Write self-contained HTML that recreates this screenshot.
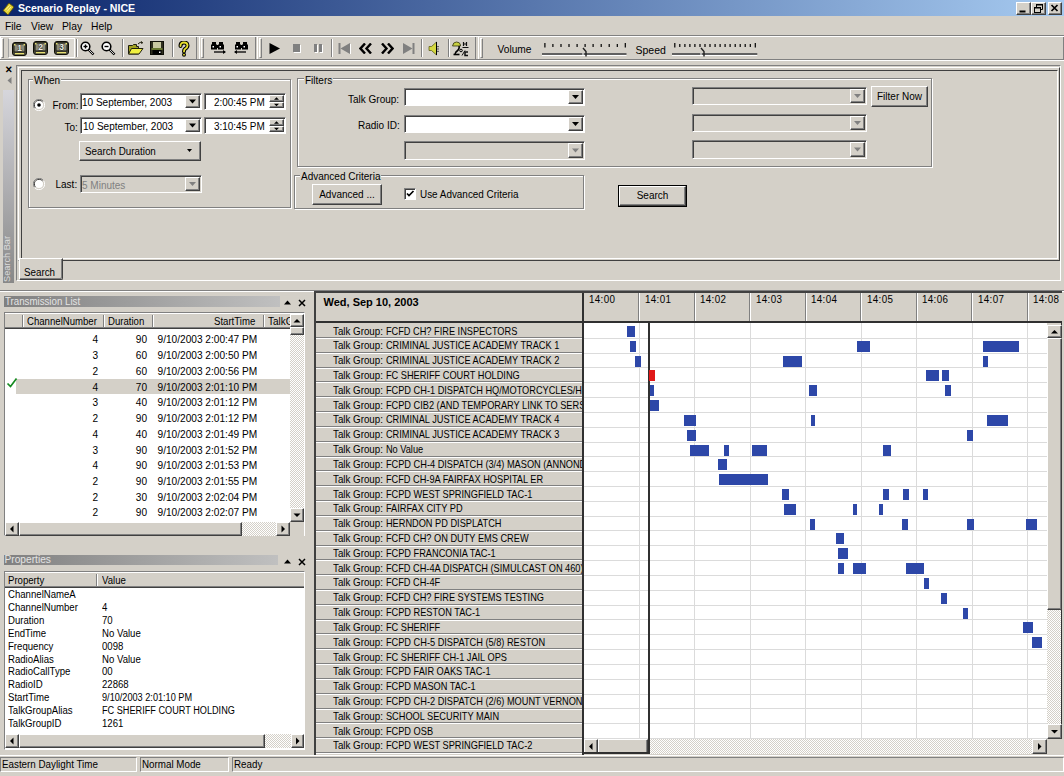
<!DOCTYPE html><html><head><meta charset="utf-8"><title>Scenario Replay - NICE</title><style>
*{margin:0;padding:0;box-sizing:border-box}
html,body{width:1064px;height:776px;overflow:hidden;background:#d4d0c8;font-family:"Liberation Sans",sans-serif;font-size:10px;color:#000}
.a{position:absolute}
.t{position:absolute;white-space:nowrap;line-height:1}
.raised{position:absolute;background:#d4d0c8;border-top:1px solid #fff;border-left:1px solid #fff;border-right:1px solid #404040;border-bottom:1px solid #404040;box-shadow:inset -1px -1px 0 #808080}
.sunken{position:absolute;background:#fff;border-top:1px solid #808080;border-left:1px solid #808080;border-right:1px solid #fff;border-bottom:1px solid #fff;box-shadow:inset 1px 1px 0 #404040}
.grp{position:absolute;border:1px solid #808080;box-shadow:1px 1px 0 #fff, inset 1px 1px 0 #fff}
.grpl{position:absolute;background:#d4d0c8;padding:0 1px;white-space:nowrap;line-height:1}
.chk{background-image:repeating-conic-gradient(#d4d0c8 0 25%, #fff 0 50%);background-size:2px 2px}
</style></head><body>
<div class="a" style="left:0px;top:0px;width:1064px;height:16px;background:linear-gradient(90deg,#0a246a,#a6caf0)"></div>
<svg class="a" style="left:2px;top:2px" width="13" height="14" viewBox="0 0 13 14"><path d="M1 8.5 L7 1 L12 5 L6 13 Z" fill="#e0d030" stroke="#504a10" stroke-width="0.9" stroke-linejoin="round"/><path d="M3.5 8 L7.5 3.5 M5 9.5 L9 5" stroke="#f8f0a0" stroke-width="1"/></svg>
<div class="t" style="left:18px;top:3px;color:#fff;font-weight:bold;font-size:10.6px">Scenario Replay - NICE</div>
<div class="raised" style="left:1016px;top:2px;width:15px;height:13px;"></div>
<div class="raised" style="left:1031px;top:2px;width:15px;height:13px;"></div>
<div class="raised" style="left:1048px;top:2px;width:14px;height:13px;"></div>
<svg class="a" style="left:1016px;top:2px" width="48" height="13" viewBox="0 0 48 13"><rect x="3.5" y="8.5" width="6" height="2" fill="#000"/><rect x="18.5" y="5.5" width="6" height="5" fill="none" stroke="#000"/><rect x="18" y="5" width="7" height="1.5" fill="#000"/><path d="M20.5 5 V2.5 H26.5 V7.5 H25" fill="none" stroke="#000"/><rect x="20" y="2" width="7" height="1.5" fill="#000"/><path d="M35.5 3 L41.5 9 M41.5 3 L35.5 9" stroke="#000" stroke-width="1.7"/></svg>
<div class="t" style="left:5px;top:22.2px;font-size:10.3px">File</div>
<div class="t" style="left:31px;top:22.2px;font-size:10.3px">View</div>
<div class="t" style="left:62px;top:22.2px;font-size:10.3px">Play</div>
<div class="t" style="left:91px;top:22.2px;font-size:10.3px">Help</div>
<div class="a" style="left:0px;top:35px;width:1064px;height:1px;background:#808080"></div>
<div class="a" style="left:0px;top:36px;width:1064px;height:1px;background:#fff"></div>
<div class="a" style="left:0px;top:59px;width:1064px;height:1px;background:#808080"></div>
<div class="a" style="left:0px;top:60px;width:1064px;height:1px;background:#fff"></div>
<div class="a" style="left:0px;top:37px;width:197px;height:22px;border-left:1px solid #fff;border-right:1px solid #808080"></div>
<div class="a" style="left:199px;top:37px;width:57px;height:22px;border-left:1px solid #fff;border-right:1px solid #808080"></div>
<div class="a" style="left:257px;top:37px;width:219px;height:22px;border-left:1px solid #fff;border-right:1px solid #808080"></div>
<div class="a" style="left:478px;top:37px;width:586px;height:22px;border-left:1px solid #fff;border-right:1px solid #808080"></div>
<div class="a" style="left:1px;top:38px;width:3px;height:20px;border-left:1px solid #fff;border-top:1px solid #fff;border-right:1px solid #808080;border-bottom:1px solid #808080"></div>
<div class="a" style="left:201px;top:38px;width:3px;height:20px;border-left:1px solid #fff;border-top:1px solid #fff;border-right:1px solid #808080;border-bottom:1px solid #808080"></div>
<div class="a" style="left:259px;top:38px;width:3px;height:20px;border-left:1px solid #fff;border-top:1px solid #fff;border-right:1px solid #808080;border-bottom:1px solid #808080"></div>
<div class="a" style="left:480px;top:38px;width:3px;height:20px;border-left:1px solid #fff;border-top:1px solid #fff;border-right:1px solid #808080;border-bottom:1px solid #808080"></div>
<div class="a" style="left:8px;top:38px;width:67px;height:20px;border-left:1px solid #a0a0a0;border-top:1px solid #fff;border-right:1px solid #fff;border-bottom:1px solid #fff;background:#dcd9d2"></div>
<svg class="a" style="left:12px;top:42px" width="15" height="14" viewBox="0 0 15 14"><rect x="0.5" y="0.5" width="14" height="13" rx="2.5" fill="#505040" stroke="#101008"/><rect x="2" y="2" width="11" height="8" fill="#8a8a78" stroke="#181810" stroke-width="1"/><rect x="2" y="2" width="1.5" height="1.5" fill="#e8e070"/><rect x="11.5" y="2" width="1.5" height="1.5" fill="#e8e070"/><rect x="3" y="11" width="9" height="1.3" fill="#e8e070"/><text x="7.5" y="9" font-family="Liberation Sans" font-weight="bold" font-size="8.5" fill="#f0f0e8" stroke="#000" stroke-width="0.6" paint-order="stroke" text-anchor="middle">1</text></svg>
<svg class="a" style="left:33px;top:41px" width="15" height="14" viewBox="0 0 15 14"><rect x="0.5" y="0.5" width="14" height="13" rx="2.5" fill="#505040" stroke="#101008"/><rect x="2" y="2" width="11" height="8" fill="#8a8a78" stroke="#181810" stroke-width="1"/><rect x="2" y="2" width="1.5" height="1.5" fill="#e8e070"/><rect x="11.5" y="2" width="1.5" height="1.5" fill="#e8e070"/><rect x="3" y="11" width="9" height="1.3" fill="#e8e070"/><text x="7.5" y="9" font-family="Liberation Sans" font-weight="bold" font-size="8.5" fill="#f0f0e8" stroke="#000" stroke-width="0.6" paint-order="stroke" text-anchor="middle">2</text></svg>
<svg class="a" style="left:54px;top:41px" width="15" height="14" viewBox="0 0 15 14"><rect x="0.5" y="0.5" width="14" height="13" rx="2.5" fill="#505040" stroke="#101008"/><rect x="2" y="2" width="11" height="8" fill="#8a8a78" stroke="#181810" stroke-width="1"/><rect x="2" y="2" width="1.5" height="1.5" fill="#e8e070"/><rect x="11.5" y="2" width="1.5" height="1.5" fill="#e8e070"/><rect x="3" y="11" width="9" height="1.3" fill="#e8e070"/><text x="7.5" y="9" font-family="Liberation Sans" font-weight="bold" font-size="8.5" fill="#f0f0e8" stroke="#000" stroke-width="0.6" paint-order="stroke" text-anchor="middle">3</text></svg>
<div class="a" style="left:76px;top:39px;width:1px;height:18px;background:#808080"></div>
<div class="a" style="left:77px;top:39px;width:1px;height:18px;background:#fff"></div>
<svg class="a" style="left:80px;top:41px" width="15" height="15" viewBox="0 0 15 15"><circle cx="5.5" cy="5.5" r="4.3" fill="#fff" stroke="#000" stroke-width="1.6"/><path d="M8.5 8.5 L13.5 13.5" stroke="#000" stroke-width="2.4"/><path d="M9 9 L13 13" stroke="#fff" stroke-width="0.8"/><path d="M3.5 5.5 h4" stroke="#000" stroke-width="1.4"/><path d="M5.5 3.5 v4" stroke="#000" stroke-width="1.4"/></svg>
<svg class="a" style="left:101px;top:41px" width="15" height="15" viewBox="0 0 15 15"><circle cx="5.5" cy="5.5" r="4.3" fill="#fff" stroke="#000" stroke-width="1.6"/><path d="M8.5 8.5 L13.5 13.5" stroke="#000" stroke-width="2.4"/><path d="M9 9 L13 13" stroke="#fff" stroke-width="0.8"/><path d="M3.5 5.5 h4" stroke="#000" stroke-width="1.4"/></svg>
<div class="a" style="left:122px;top:39px;width:1px;height:18px;background:#808080"></div>
<div class="a" style="left:123px;top:39px;width:1px;height:18px;background:#fff"></div>
<svg class="a" style="left:128px;top:41px" width="16" height="15" viewBox="0 0 16 15"><path d="M0.5 4.5 h4 l1 -1 h3 v2 h2 v7.5 h-10 z" fill="#a0a020" stroke="#202010"/><path d="M0.5 13 L3.5 7.5 h11.5 L11 13 z" fill="#f0f040" stroke="#202010"/><path d="M10 3 Q12 0.5 14.5 1.5 M13 0.5 L14.5 1.5 L13.5 3" stroke="#202010" fill="none"/></svg>
<svg class="a" style="left:150px;top:41px" width="14" height="14" viewBox="0 0 14 14"><rect x="0.5" y="0.5" width="13" height="13" fill="#303020" stroke="#101008"/><rect x="3" y="1" width="8" height="6" fill="#c8c8a0"/><rect x="2.5" y="9" width="9" height="4.5" fill="#000"/><rect x="9" y="10.5" width="1.5" height="1.5" fill="#fff"/><rect x="1.5" y="7.5" width="11" height="1" fill="#a0c040"/></svg>
<div class="a" style="left:172px;top:39px;width:1px;height:18px;background:#808080"></div>
<div class="a" style="left:173px;top:39px;width:1px;height:18px;background:#fff"></div>
<svg class="a" style="left:178px;top:41px" width="12" height="16" viewBox="0 0 12 16"><path d="M2.5 5 Q2.5 1.5 6 1.5 Q9.5 1.5 9.5 4.5 Q9.5 6.5 7 8 Q6 8.7 6 10.5" fill="none" stroke="#000" stroke-width="4" stroke-linecap="round"/><path d="M2.5 5 Q2.5 1.5 6 1.5 Q9.5 1.5 9.5 4.5 Q9.5 6.5 7 8 Q6 8.7 6 10.5" fill="none" stroke="#e8e030" stroke-width="1.8" stroke-linecap="round"/><circle cx="6" cy="13.7" r="2" fill="#000"/><circle cx="6" cy="13.7" r="0.9" fill="#e8e030"/></svg>
<svg class="a" style="left:211px;top:41px" width="16" height="13" viewBox="0 0 16 13"><g transform="translate(0,0)"><rect x="1" y="1" width="4" height="3" fill="#000"/><rect x="8" y="1" width="4" height="3" fill="#000"/><rect x="0" y="3.5" width="6" height="5" fill="#000"/><rect x="7" y="3.5" width="6" height="5" fill="#000"/><rect x="5" y="4" width="3" height="3" fill="#000"/><rect x="1.5" y="5" width="1.5" height="1.5" fill="#fff"/><rect x="8.5" y="5" width="1.5" height="1.5" fill="#fff"/></g><path d="M3 11 h11" stroke="#000" stroke-width="1.3"/><path d="M12 9 l3 2 l-3 2 z" fill="#000"/></svg>
<svg class="a" style="left:233px;top:41px" width="16" height="13" viewBox="0 0 16 13"><g transform="translate(2,0)"><rect x="1" y="1" width="4" height="3" fill="#000"/><rect x="8" y="1" width="4" height="3" fill="#000"/><rect x="0" y="3.5" width="6" height="5" fill="#000"/><rect x="7" y="3.5" width="6" height="5" fill="#000"/><rect x="5" y="4" width="3" height="3" fill="#000"/><rect x="1.5" y="5" width="1.5" height="1.5" fill="#fff"/><rect x="8.5" y="5" width="1.5" height="1.5" fill="#fff"/></g><path d="M2 11 h11" stroke="#000" stroke-width="1.3"/><path d="M4 9 l-3 2 l3 2 z" fill="#000"/></svg>
<svg class="a" style="left:269px;top:43px" width="12" height="11"><path d="M0.5 0 L11 5.5 L0.5 11 Z" fill="#000"/></svg>
<div class="a" style="left:293px;top:44px;width:7px;height:8px;background:#808080;box-shadow:1px 1px 0 #fff"></div>
<div class="a" style="left:314px;top:44px;width:3px;height:8px;background:#808080;box-shadow:1px 1px 0 #fff"></div>
<div class="a" style="left:319px;top:44px;width:3px;height:8px;background:#808080;box-shadow:1px 1px 0 #fff"></div>
<div class="a" style="left:331px;top:39px;width:1px;height:18px;background:#808080"></div>
<div class="a" style="left:332px;top:39px;width:1px;height:18px;background:#fff"></div>
<svg class="a" style="left:338px;top:43px" width="13" height="11"><rect x="0.5" y="0" width="2" height="11" fill="#808080"/><path d="M12 0 L2.5 5.5 L12 11 Z" fill="#808080"/><path d="M12.5 1 v10.5 h-10" stroke="#fff" fill="none"/></svg>
<svg class="a" style="left:359px;top:43px" width="14" height="11"><path d="M6 0.5 L1.5 5.5 L6 10.5 M12 0.5 L7.5 5.5 L12 10.5" stroke="#000" stroke-width="2.4" fill="none"/></svg>
<svg class="a" style="left:380px;top:43px" width="14" height="11"><path d="M2 0.5 L6.5 5.5 L2 10.5 M8 0.5 L12.5 5.5 L8 10.5" stroke="#000" stroke-width="2.4" fill="none"/></svg>
<svg class="a" style="left:402px;top:43px" width="13" height="11"><path d="M1 0 L10.5 5.5 L1 11 Z" fill="#808080"/><rect x="10.5" y="0" width="2" height="11" fill="#808080"/></svg>
<div class="a" style="left:421px;top:39px;width:1px;height:18px;background:#808080"></div>
<div class="a" style="left:422px;top:39px;width:1px;height:18px;background:#fff"></div>
<svg class="a" style="left:428px;top:41px" width="12" height="15" viewBox="0 0 12 15"><path d="M1 5.5 h2.5 l5 -4.5 v13 l-5 -4.5 h-2.5 z" fill="#d4d840" stroke="#505010" stroke-width="0.7"/><path d="M8.5 1 v13" stroke="#000" stroke-width="1"/><path d="M10 5 v1.2 M10 7.4 v1.2 M10 9.8 v1.2" stroke="#000" stroke-width="1"/></svg>
<div class="a" style="left:448px;top:39px;width:1px;height:18px;background:#808080"></div>
<div class="a" style="left:449px;top:39px;width:1px;height:18px;background:#fff"></div>
<svg class="a" style="left:452px;top:41px" width="18" height="16" viewBox="0 0 18 16"><path d="M0.5 5 Q1 1 4.5 1 Q8 1 8.5 4 L8.5 5 Z" fill="#c8d040" stroke="#303010" stroke-width="0.8"/><path d="M7 5 Q8 8 4 11 L3 13" fill="none" stroke="#000" stroke-width="1.6"/><path d="M1.5 13.5 h6" stroke="#000" stroke-width="1.6"/><circle cx="9" cy="9.5" r="1.3" fill="none" stroke="#000" stroke-width="1"/><path d="M11.5 1 v4 M14.5 1 v4 M11.5 3 h3 M10.5 6.5 h6" stroke="#101010" stroke-width="1.2"/><path d="M16 11 h-3 v3.5 h3" fill="none" stroke="#101010" stroke-width="1.5"/><path d="M10 14.5 l3 -5" stroke="#101010" stroke-width="1"/></svg>
<div class="t" style="left:497.5px;top:45px;font-size:10.2px">Volume</div>
<div class="t" style="left:635.5px;top:45px;font-size:10.5px">Speed</div>
<svg class="a" style="left:541.5px;top:41px" width="86.5" height="17"><rect x="2.3" y="2" width="1.2" height="4.5" fill="#000"/><rect x="10.3" y="3" width="1.2" height="3" fill="#000"/><rect x="18.4" y="3" width="1.2" height="3" fill="#000"/><rect x="26.4" y="3" width="1.2" height="3" fill="#000"/><rect x="34.5" y="3" width="1.2" height="3" fill="#000"/><rect x="42.5" y="3" width="1.2" height="3" fill="#000"/><rect x="50.5" y="3" width="1.2" height="3" fill="#000"/><rect x="58.6" y="3" width="1.2" height="3" fill="#000"/><rect x="66.6" y="3" width="1.2" height="3" fill="#000"/><rect x="74.7" y="3" width="1.2" height="3" fill="#000"/><rect x="82.7" y="2" width="1.2" height="4.5" fill="#000"/><rect x="0" y="12" width="84.5" height="2" fill="#606060"/><rect x="0" y="14" width="84.5" height="1" fill="#fff"/><path d="M41.0 7 L44.0 10.5 V15.5" fill="none" stroke="#202020" stroke-width="1.4"/><path d="M41.0 12 V14.5" stroke="#fff" stroke-width="1"/></svg>
<svg class="a" style="left:672.3px;top:41px" width="87.30000000000007" height="17"><rect x="2.2" y="2" width="1.2" height="4.5" fill="#000"/><rect x="7.2" y="3" width="1.2" height="3" fill="#000"/><rect x="12.3" y="3" width="1.2" height="3" fill="#000"/><rect x="17.3" y="3" width="1.2" height="3" fill="#000"/><rect x="22.3" y="3" width="1.2" height="3" fill="#000"/><rect x="27.4" y="3" width="1.2" height="3" fill="#000"/><rect x="32.4" y="3" width="1.2" height="3" fill="#000"/><rect x="37.4" y="3" width="1.2" height="3" fill="#000"/><rect x="42.5" y="3" width="1.2" height="3" fill="#000"/><rect x="47.5" y="3" width="1.2" height="3" fill="#000"/><rect x="52.5" y="3" width="1.2" height="3" fill="#000"/><rect x="57.5" y="3" width="1.2" height="3" fill="#000"/><rect x="62.6" y="3" width="1.2" height="3" fill="#000"/><rect x="67.6" y="3" width="1.2" height="3" fill="#000"/><rect x="72.6" y="3" width="1.2" height="3" fill="#000"/><rect x="77.7" y="3" width="1.2" height="3" fill="#000"/><rect x="82.7" y="2" width="1.2" height="4.5" fill="#000"/><rect x="0" y="12" width="85.30000000000007" height="2" fill="#606060"/><rect x="0" y="14" width="85.30000000000007" height="1" fill="#fff"/><path d="M29.0 7 L32.0 10.5 V15.5" fill="none" stroke="#202020" stroke-width="1.4"/><path d="M29.0 12 V14.5" stroke="#fff" stroke-width="1"/></svg>
<div class="t" style="left:5px;top:65px;font-size:10px;font-weight:bold;transform-origin:0 0;transform:scaleX(0.9000)">&#x2715;</div>
<svg class="a" style="left:7px;top:77px" width="5" height="8"><path d="M4.5 0 L0.5 3.5 L4.5 7 Z" fill="#808080"/></svg>
<div class="a" style="left:3px;top:90px;width:11px;height:193px;background:linear-gradient(0deg,#888888,#d6d6dc)"></div>
<div class="t" style="left:3.2px;top:282px;color:#dcdcdc;font-size:9.2px;transform-origin:0 0;transform:rotate(-90deg)">Search Bar</div>
<div class="a" style="left:16px;top:65px;width:1045px;height:216px;border-top:1px solid #808080;border-left:1px solid #808080;border-right:1px solid #fff;border-bottom:1px solid #fff"></div>
<div class="a" style="left:18px;top:67px;width:1042px;height:194px;border-top:1px solid #fff;border-left:1px solid #fff;border-right:1px solid #404040;border-bottom:1px solid #404040"></div>
<div class="a" style="left:21px;top:70px;width:1037px;height:189px;border-top:1px solid #404040;border-left:1px solid #404040;border-right:1px solid #fff;border-bottom:1px solid #fff"></div>
<div class="a" style="left:19px;top:258px;width:44px;height:22px;background:#d4d0c8;border-top:1px solid #fff;border-left:1px solid #fff;border-right:1px solid #404040;border-bottom:1px solid #404040;border-bottom-right-radius:2px;box-shadow:inset -1px -1px 0 #808080"></div>
<div class="t" style="left:24.3px;top:267.5px;font-size:10px;transform-origin:0 0;transform:scaleX(0.9800)">Search</div>
<div class="grp" style="left:28px;top:79px;width:263px;height:129px"></div>
<div class="grpl" style="left:33px;top:76px;font-size:10px">When</div>
<svg class="a" style="left:33px;top:99px" width="12" height="12" viewBox="0 0 12 12"><path d="M10.5 2.5 A5.5 5.5 0 0 0 1.5 9.5" stroke="#808080" fill="none"/><path d="M9.5 3 A4.5 4.5 0 0 0 2.5 9" stroke="#404040" fill="none"/><path d="M1.5 9.5 A5.5 5.5 0 0 0 10.5 2.5" stroke="#fff" fill="none"/><circle cx="6" cy="6" r="4" fill="#fff"/><circle cx="6" cy="6" r="1.8" fill="#000"/></svg>
<div class="t" style="left:52.5px;top:100.8px;font-size:10px">From:</div>
<div class="sunken" style="left:80px;top:93px;width:122px;height:17px;background:#fff"></div>
<div class="raised" style="left:185px;top:95px;width:15px;height:13px;"></div>
<svg class="a" style="left:185px;top:95px" width="15" height="13"><path d="M4.0 4.5 h7 l-3.5 4 z" fill="#000"/><path d="M4.0 5.0 h7 l-3.5 3.5 z" fill="#fff" transform="translate(1,1)" opacity="0"/></svg>
<div class="t" style="left:82px;top:98.0px;color:#000;font-size:10px">10 September, 2003</div>
<div class="sunken" style="left:204px;top:93px;width:82px;height:17px"></div>
<div class="raised" style="left:269px;top:95px;width:15px;height:6.5px;"></div>
<div class="raised" style="left:269px;top:101.5px;width:15px;height:6.5px;"></div>
<svg class="a" style="left:269px;top:95px" width="15" height="13"><path d="M5.0 4.75 h5 l-2.5 -2.5 z" fill="#000"/><path d="M5.0 8.75 h5 l-2.5 2.5 z" fill="#000"/></svg>
<div class="t" style="left:213.5px;top:98.0px;font-size:10px;transform-origin:0 0;transform:scaleX(0.9900)">2:00:45 PM</div>
<div class="t" style="left:64.5px;top:122.5px;font-size:10px">To:</div>
<div class="sunken" style="left:80px;top:117px;width:122px;height:17px;background:#fff"></div>
<div class="raised" style="left:185px;top:119px;width:15px;height:13px;"></div>
<svg class="a" style="left:185px;top:119px" width="15" height="13"><path d="M4.0 4.5 h7 l-3.5 4 z" fill="#000"/><path d="M4.0 5.0 h7 l-3.5 3.5 z" fill="#fff" transform="translate(1,1)" opacity="0"/></svg>
<div class="t" style="left:83px;top:122.0px;color:#000;font-size:10px">10 September, 2003</div>
<div class="sunken" style="left:204px;top:117px;width:82px;height:17px"></div>
<div class="raised" style="left:269px;top:119px;width:15px;height:6.5px;"></div>
<div class="raised" style="left:269px;top:125.5px;width:15px;height:6.5px;"></div>
<svg class="a" style="left:269px;top:119px" width="15" height="13"><path d="M5.0 4.75 h5 l-2.5 -2.5 z" fill="#000"/><path d="M5.0 8.75 h5 l-2.5 2.5 z" fill="#000"/></svg>
<div class="t" style="left:213.5px;top:122.0px;font-size:10px;transform-origin:0 0;transform:scaleX(0.9900)">3:10:45 PM</div>
<div class="raised" style="left:79px;top:141px;width:122px;height:20px;"></div>
<div class="t" style="left:85px;top:146.8px;font-size:10px;transform-origin:0 0;transform:scaleX(0.9800)">Search Duration</div>
<svg class="a" style="left:187px;top:149px" width="7" height="4"><path d="M0 0 h5 l-2.5 3 z" fill="#000"/></svg>
<svg class="a" style="left:33px;top:178px" width="12" height="12" viewBox="0 0 12 12"><path d="M10.5 2.5 A5.5 5.5 0 0 0 1.5 9.5" stroke="#808080" fill="none"/><path d="M9.5 3 A4.5 4.5 0 0 0 2.5 9" stroke="#404040" fill="none"/><path d="M1.5 9.5 A5.5 5.5 0 0 0 10.5 2.5" stroke="#fff" fill="none"/><circle cx="6" cy="6" r="4" fill="#fff"/></svg>
<div class="t" style="left:55.5px;top:180px;font-size:10px">Last:</div>
<div class="sunken" style="left:80px;top:175px;width:122px;height:18px;background:#d4d0c8"></div>
<div class="raised" style="left:185px;top:177px;width:15px;height:14px;"></div>
<svg class="a" style="left:185px;top:177px" width="15" height="14"><path d="M4.0 5.0 h7 l-3.5 4 z" fill="#808080"/><path d="M4.0 5.5 h7 l-3.5 3.5 z" fill="#fff" transform="translate(1,1)" opacity="0"/></svg>
<div class="t" style="left:82px;top:180.5px;color:#808080;font-size:10px">5 Minutes</div>
<div class="grp" style="left:297px;top:78px;width:635px;height:89px"></div>
<div class="grpl" style="left:304px;top:76px;font-size:10px">Filters</div>
<div class="t" style="left:348px;top:94.5px;font-size:10px">Talk Group:</div>
<div class="sunken" style="left:404px;top:88px;width:181px;height:18px;background:#fff"></div>
<div class="raised" style="left:568px;top:90px;width:15px;height:14px;"></div>
<svg class="a" style="left:568px;top:90px" width="15" height="14"><path d="M4.0 5.0 h7 l-3.5 4 z" fill="#000"/><path d="M4.0 5.5 h7 l-3.5 3.5 z" fill="#fff" transform="translate(1,1)" opacity="0"/></svg>
<div class="t" style="left:358px;top:121px;font-size:10px">Radio ID:</div>
<div class="sunken" style="left:404px;top:115px;width:181px;height:18px;background:#fff"></div>
<div class="raised" style="left:568px;top:117px;width:15px;height:14px;"></div>
<svg class="a" style="left:568px;top:117px" width="15" height="14"><path d="M4.0 5.0 h7 l-3.5 4 z" fill="#000"/><path d="M4.0 5.5 h7 l-3.5 3.5 z" fill="#fff" transform="translate(1,1)" opacity="0"/></svg>
<div class="sunken" style="left:404px;top:141px;width:181px;height:19px;background:#d4d0c8"></div>
<div class="raised" style="left:568px;top:143px;width:15px;height:15px;"></div>
<svg class="a" style="left:568px;top:143px" width="15" height="15"><path d="M4.0 5.5 h7 l-3.5 4 z" fill="#808080"/><path d="M4.0 6.0 h7 l-3.5 3.5 z" fill="#fff" transform="translate(1,1)" opacity="0"/></svg>
<div class="sunken" style="left:692px;top:87px;width:175px;height:18px;background:#d4d0c8"></div>
<div class="raised" style="left:850px;top:89px;width:15px;height:14px;"></div>
<svg class="a" style="left:850px;top:89px" width="15" height="14"><path d="M4.0 5.0 h7 l-3.5 4 z" fill="#808080"/><path d="M4.0 5.5 h7 l-3.5 3.5 z" fill="#fff" transform="translate(1,1)" opacity="0"/></svg>
<div class="sunken" style="left:692px;top:114px;width:175px;height:18px;background:#d4d0c8"></div>
<div class="raised" style="left:850px;top:116px;width:15px;height:14px;"></div>
<svg class="a" style="left:850px;top:116px" width="15" height="14"><path d="M4.0 5.0 h7 l-3.5 4 z" fill="#808080"/><path d="M4.0 5.5 h7 l-3.5 3.5 z" fill="#fff" transform="translate(1,1)" opacity="0"/></svg>
<div class="sunken" style="left:692px;top:140px;width:175px;height:19px;background:#d4d0c8"></div>
<div class="raised" style="left:850px;top:142px;width:15px;height:15px;"></div>
<svg class="a" style="left:850px;top:142px" width="15" height="15"><path d="M4.0 5.5 h7 l-3.5 4 z" fill="#808080"/><path d="M4.0 6.0 h7 l-3.5 3.5 z" fill="#fff" transform="translate(1,1)" opacity="0"/></svg>
<div class="raised" style="left:871px;top:86px;width:57px;height:21px;"></div>
<div class="t" style="left:871px;top:91.5px;width:57px;text-align:center;font-size:10px">Filter Now</div>
<div class="grp" style="left:294px;top:175px;width:290px;height:34px"></div>
<div class="grpl" style="left:300px;top:171.5px;font-size:10px">Advanced Criteria</div>
<div class="raised" style="left:312px;top:184px;width:70px;height:21px;"></div>
<div class="t" style="left:312px;top:189.5px;width:70px;text-align:center;font-size:10px">Advanced ...</div>
<div class="sunken" style="left:404px;top:188px;width:12px;height:12px"></div>
<svg class="a" style="left:404px;top:188px" width="12" height="12"><path d="M3 5.5 L5 7.5 L9.5 3" stroke="#000" stroke-width="1.7" fill="none"/></svg>
<div class="t" style="left:420px;top:189.7px;font-size:10px;transform-origin:0 0;transform:scaleX(0.9900)">Use Advanced Criteria</div>
<div class="a" style="left:618px;top:185px;width:69px;height:22px;border:1px solid #000"></div>
<div class="raised" style="left:619px;top:186px;width:67px;height:20px;"></div>
<div class="t" style="left:618px;top:191.0px;width:69px;text-align:center;font-size:10px">Search</div>
<div class="a" style="left:0px;top:290px;width:1064px;height:1px;background:#808080"></div>
<div class="a" style="left:0px;top:291px;width:1064px;height:1px;background:#fff"></div>
<div class="a" style="left:4px;top:296px;width:276px;height:11px;background:linear-gradient(90deg,#808080,#c0c0c0)"></div>
<div class="t" style="left:4.5px;top:297.2px;color:#e4e4e4;font-size:10px;transform-origin:0 0;transform:scaleX(0.9700)">Transmission List</div>
<svg class="a" style="left:284px;top:300px" width="8" height="5"><path d="M0 4.5 h7 l-3.5 -4 z" fill="#000"/></svg>
<svg class="a" style="left:298px;top:299px" width="8" height="8"><path d="M1 1 L7 7 M7 1 L1 7" stroke="#000" stroke-width="1.5"/></svg>
<div class="a" style="left:4px;top:312px;width:301px;height:224px;background:#fff;border:1px solid #808080;border-right-color:#fff;border-bottom-color:#fff"></div>
<div class="a" style="left:5px;top:313px;width:286px;height:16px;background:#d4d0c8;border-top:1px solid #fff;border-bottom:1px solid #404040;box-shadow:inset 0 -1px 0 #808080"></div>
<div class="a" style="left:22px;top:315px;width:1px;height:12px;background:#808080"></div>
<div class="a" style="left:23px;top:315px;width:1px;height:12px;background:#fff"></div>
<div class="a" style="left:103px;top:315px;width:1px;height:12px;background:#808080"></div>
<div class="a" style="left:104px;top:315px;width:1px;height:12px;background:#fff"></div>
<div class="a" style="left:152px;top:315px;width:1px;height:12px;background:#808080"></div>
<div class="a" style="left:153px;top:315px;width:1px;height:12px;background:#fff"></div>
<div class="a" style="left:263px;top:315px;width:1px;height:12px;background:#808080"></div>
<div class="a" style="left:264px;top:315px;width:1px;height:12px;background:#fff"></div>
<div class="t" style="left:27px;top:317px;font-size:10px;transform-origin:0 0;transform:scaleX(0.9600)">ChannelNumber</div>
<div class="t" style="left:108px;top:317px;font-size:10px;transform-origin:0 0;transform:scaleX(0.9600)">Duration</div>
<div class="t" style="left:214px;top:317px;font-size:10px;transform-origin:0 0;transform:scaleX(0.9600)">StartTime</div>
<div class="t" style="left:268px;top:317px;width:22px;overflow:hidden;font-size:10px">TalkGroup</div>
<div class="t" style="left:60px;top:335.4px;width:38px;text-align:right;font-size:10.1px">4</div>
<div class="t" style="left:110px;top:335.4px;width:37px;text-align:right;font-size:10.1px">90</div>
<div class="t" style="left:157.5px;top:335.4px;font-size:10.15px">9/10/2003 2:00:47 PM</div>
<div class="t" style="left:60px;top:351.13px;width:38px;text-align:right;font-size:10.1px">3</div>
<div class="t" style="left:110px;top:351.13px;width:37px;text-align:right;font-size:10.1px">60</div>
<div class="t" style="left:157.5px;top:351.13px;font-size:10.15px">9/10/2003 2:00:50 PM</div>
<div class="t" style="left:60px;top:366.85999999999996px;width:38px;text-align:right;font-size:10.1px">2</div>
<div class="t" style="left:110px;top:366.85999999999996px;width:37px;text-align:right;font-size:10.1px">60</div>
<div class="t" style="left:157.5px;top:366.85999999999996px;font-size:10.15px">9/10/2003 2:00:56 PM</div>
<div class="a" style="left:16px;top:378.59px;width:274px;height:15px;background:#d4d0c8"></div>
<svg class="a" style="left:6px;top:377.09px" width="12" height="12"><path d="M1.5 6.5 L4.5 9.5 L10.5 1.5" stroke="#148a20" stroke-width="1.7" fill="none"/></svg>
<div class="t" style="left:60px;top:382.59px;width:38px;text-align:right;font-size:10.1px">4</div>
<div class="t" style="left:110px;top:382.59px;width:37px;text-align:right;font-size:10.1px">70</div>
<div class="t" style="left:157.5px;top:382.59px;font-size:10.15px">9/10/2003 2:01:10 PM</div>
<div class="t" style="left:60px;top:398.32px;width:38px;text-align:right;font-size:10.1px">3</div>
<div class="t" style="left:110px;top:398.32px;width:37px;text-align:right;font-size:10.1px">40</div>
<div class="t" style="left:157.5px;top:398.32px;font-size:10.15px">9/10/2003 2:01:12 PM</div>
<div class="t" style="left:60px;top:414.04999999999995px;width:38px;text-align:right;font-size:10.1px">2</div>
<div class="t" style="left:110px;top:414.04999999999995px;width:37px;text-align:right;font-size:10.1px">90</div>
<div class="t" style="left:157.5px;top:414.04999999999995px;font-size:10.15px">9/10/2003 2:01:12 PM</div>
<div class="t" style="left:60px;top:429.78px;width:38px;text-align:right;font-size:10.1px">4</div>
<div class="t" style="left:110px;top:429.78px;width:37px;text-align:right;font-size:10.1px">40</div>
<div class="t" style="left:157.5px;top:429.78px;font-size:10.15px">9/10/2003 2:01:49 PM</div>
<div class="t" style="left:60px;top:445.51px;width:38px;text-align:right;font-size:10.1px">3</div>
<div class="t" style="left:110px;top:445.51px;width:37px;text-align:right;font-size:10.1px">90</div>
<div class="t" style="left:157.5px;top:445.51px;font-size:10.15px">9/10/2003 2:01:52 PM</div>
<div class="t" style="left:60px;top:461.24px;width:38px;text-align:right;font-size:10.1px">4</div>
<div class="t" style="left:110px;top:461.24px;width:37px;text-align:right;font-size:10.1px">90</div>
<div class="t" style="left:157.5px;top:461.24px;font-size:10.15px">9/10/2003 2:01:53 PM</div>
<div class="t" style="left:60px;top:476.96999999999997px;width:38px;text-align:right;font-size:10.1px">2</div>
<div class="t" style="left:110px;top:476.96999999999997px;width:37px;text-align:right;font-size:10.1px">90</div>
<div class="t" style="left:157.5px;top:476.96999999999997px;font-size:10.15px">9/10/2003 2:01:55 PM</div>
<div class="t" style="left:60px;top:492.7px;width:38px;text-align:right;font-size:10.1px">2</div>
<div class="t" style="left:110px;top:492.7px;width:37px;text-align:right;font-size:10.1px">30</div>
<div class="t" style="left:157.5px;top:492.7px;font-size:10.15px">9/10/2003 2:02:04 PM</div>
<div class="t" style="left:60px;top:508.42999999999995px;width:38px;text-align:right;font-size:10.1px">2</div>
<div class="t" style="left:110px;top:508.42999999999995px;width:37px;text-align:right;font-size:10.1px">90</div>
<div class="t" style="left:157.5px;top:508.42999999999995px;font-size:10.15px">9/10/2003 2:02:07 PM</div>
<div class="a" style="left:290px;top:314px;width:14px;height:206px;"></div>
<div class="a chk" style="left:290px;top:314px;width:14px;height:206px"></div>
<div class="raised" style="left:290px;top:314px;width:14px;height:13px;"></div>
<svg class="a" style="left:290px;top:314px" width="14" height="13"><path d="M3.5 8.5 h7 l-3.5 -3.5 z" fill="#000"/></svg>
<div class="raised" style="left:290px;top:327px;width:14px;height:8px;"></div>
<div class="raised" style="left:290px;top:508px;width:14px;height:14px;"></div>
<svg class="a" style="left:290px;top:508px" width="14" height="14"><path d="M3.5 5.5 h7 l-3.5 3.5 z" fill="#000"/></svg>
<div class="a chk" style="left:5px;top:522px;width:285px;height:14px"></div>
<div class="raised" style="left:5px;top:522px;width:14px;height:14px;"></div>
<svg class="a" style="left:5px;top:522px" width="14" height="14"><path d="M8.5 3.5 v7 l-3.5 -3.5 z" fill="#000"/></svg>
<div class="raised" style="left:19px;top:522px;width:223px;height:14px;"></div>
<div class="raised" style="left:276px;top:522px;width:14px;height:14px;"></div>
<svg class="a" style="left:276px;top:522px" width="14" height="14"><path d="M5.5 3.5 v7 l3.5 -3.5 z" fill="#000"/></svg>
<div class="a" style="left:290px;top:522px;width:14px;height:14px;background:#d4d0c8"></div>
<div class="a" style="left:4px;top:555px;width:274px;height:10px;background:linear-gradient(90deg,#808080,#c0c0c0)"></div>
<div class="t" style="left:4.5px;top:555px;color:#e4e4e4;font-size:10.2px">Properties</div>
<svg class="a" style="left:284px;top:559px" width="8" height="5"><path d="M0 4.5 h7 l-3.5 -4 z" fill="#000"/></svg>
<svg class="a" style="left:298px;top:558px" width="8" height="8"><path d="M1 1 L7 7 M7 1 L1 7" stroke="#000" stroke-width="1.5"/></svg>
<div class="a" style="left:4px;top:571px;width:301px;height:179px;background:#fff;border:1px solid #808080;border-right-color:#fff;border-bottom-color:#fff"></div>
<div class="a" style="left:5px;top:572px;width:299px;height:16px;background:#d4d0c8;border-top:1px solid #fff;border-bottom:1px solid #404040;box-shadow:inset 0 -1px 0 #808080"></div>
<div class="a" style="left:96px;top:574px;width:1px;height:12px;background:#808080"></div>
<div class="a" style="left:97px;top:574px;width:1px;height:12px;background:#fff"></div>
<div class="t" style="left:8px;top:576px;font-size:10px;transform-origin:0 0;transform:scaleX(0.9600)">Property</div>
<div class="t" style="left:102px;top:576px;font-size:10px;transform-origin:0 0;transform:scaleX(0.9600)">Value</div>
<div class="t" style="left:7.5px;top:589.8px;font-size:10px;transform-origin:0 0;transform:scaleX(0.9600)">ChannelNameA</div>
<div class="t" style="left:102px;top:589.8px;font-size:10px;transform-origin:0 0;transform:scaleX(0.9600)"></div>
<div class="t" style="left:7.5px;top:602.74px;font-size:10px;transform-origin:0 0;transform:scaleX(0.9600)">ChannelNumber</div>
<div class="t" style="left:102px;top:602.74px;font-size:10px;transform-origin:0 0;transform:scaleX(0.9600)">4</div>
<div class="t" style="left:7.5px;top:615.68px;font-size:10px;transform-origin:0 0;transform:scaleX(0.9600)">Duration</div>
<div class="t" style="left:102px;top:615.68px;font-size:10px;transform-origin:0 0;transform:scaleX(0.9600)">70</div>
<div class="t" style="left:7.5px;top:628.62px;font-size:10px;transform-origin:0 0;transform:scaleX(0.9600)">EndTime</div>
<div class="t" style="left:102px;top:628.62px;font-size:10px;transform-origin:0 0;transform:scaleX(0.9600)">No Value</div>
<div class="t" style="left:7.5px;top:641.56px;font-size:10px;transform-origin:0 0;transform:scaleX(0.9600)">Frequency</div>
<div class="t" style="left:102px;top:641.56px;font-size:10px;transform-origin:0 0;transform:scaleX(0.9600)">0098</div>
<div class="t" style="left:7.5px;top:654.5px;font-size:10px;transform-origin:0 0;transform:scaleX(0.9600)">RadioAlias</div>
<div class="t" style="left:102px;top:654.5px;font-size:10px;transform-origin:0 0;transform:scaleX(0.9600)">No Value</div>
<div class="t" style="left:7.5px;top:667.4399999999999px;font-size:10px;transform-origin:0 0;transform:scaleX(0.9600)">RadioCallType</div>
<div class="t" style="left:102px;top:667.4399999999999px;font-size:10px;transform-origin:0 0;transform:scaleX(0.9600)">00</div>
<div class="t" style="left:7.5px;top:680.38px;font-size:10px;transform-origin:0 0;transform:scaleX(0.9600)">RadioID</div>
<div class="t" style="left:102px;top:680.38px;font-size:10px;transform-origin:0 0;transform:scaleX(0.9600)">22868</div>
<div class="t" style="left:7.5px;top:693.3199999999999px;font-size:10px;transform-origin:0 0;transform:scaleX(0.9600)">StartTime</div>
<div class="t" style="left:102px;top:693.3199999999999px;font-size:10px;transform-origin:0 0;transform:scaleX(0.915)">9/10/2003 2:01:10 PM</div>
<div class="t" style="left:7.5px;top:706.26px;font-size:10px;transform-origin:0 0;transform:scaleX(0.9600)">TalkGroupAlias</div>
<div class="t" style="left:102px;top:706.26px;font-size:10px;transform-origin:0 0;transform:scaleX(0.915)">FC SHERIFF COURT HOLDING</div>
<div class="t" style="left:7.5px;top:719.1999999999999px;font-size:10px;transform-origin:0 0;transform:scaleX(0.9600)">TalkGroupID</div>
<div class="t" style="left:102px;top:719.1999999999999px;font-size:10px;transform-origin:0 0;transform:scaleX(0.9600)">1261</div>
<div class="a chk" style="left:5px;top:734px;width:299px;height:14px"></div>
<div class="raised" style="left:5px;top:734px;width:14px;height:14px;"></div>
<svg class="a" style="left:5px;top:734px" width="14" height="14"><path d="M8.5 3.5 v7 l-3.5 -3.5 z" fill="#000"/></svg>
<div class="raised" style="left:19px;top:734px;width:246px;height:14px;"></div>
<div class="raised" style="left:291px;top:734px;width:13px;height:14px;"></div>
<svg class="a" style="left:291px;top:734px" width="13" height="14"><path d="M5.0 3.5 v7 l3.5 -3.5 z" fill="#000"/></svg>
<div class="a" style="left:314px;top:291px;width:748px;height:464px;background:#d4d0c8;border-top:2px solid #404040;border-left:2px solid #404040"></div>
<div class="t" style="left:323.5px;top:297px;font-weight:bold;font-size:11px">Wed, Sep 10, 2003</div>
<div class="a" style="left:582px;top:293px;width:2px;height:462px;background:#303030"></div>
<div class="a" style="left:316px;top:321px;width:746px;height:2px;background:#303030"></div>
<div class="t" style="left:589.3px;top:295px;font-size:10px;letter-spacing:0.35px;transform-origin:0 0;transform:scaleX(0.9800)">14:00</div>
<div class="a" style="left:638.0px;top:293px;width:1px;height:28px;background:#808080"></div>
<div class="a" style="left:639.0px;top:293px;width:1px;height:28px;background:#fff"></div>
<div class="t" style="left:644.8px;top:295px;font-size:10px;letter-spacing:0.35px;transform-origin:0 0;transform:scaleX(0.9800)">14:01</div>
<div class="a" style="left:693.5px;top:293px;width:1px;height:28px;background:#808080"></div>
<div class="a" style="left:694.5px;top:293px;width:1px;height:28px;background:#fff"></div>
<div class="t" style="left:700.3px;top:295px;font-size:10px;letter-spacing:0.35px;transform-origin:0 0;transform:scaleX(0.9800)">14:02</div>
<div class="a" style="left:749.0px;top:293px;width:1px;height:28px;background:#808080"></div>
<div class="a" style="left:750.0px;top:293px;width:1px;height:28px;background:#fff"></div>
<div class="t" style="left:755.8px;top:295px;font-size:10px;letter-spacing:0.35px;transform-origin:0 0;transform:scaleX(0.9800)">14:03</div>
<div class="a" style="left:804.5px;top:293px;width:1px;height:28px;background:#808080"></div>
<div class="a" style="left:805.5px;top:293px;width:1px;height:28px;background:#fff"></div>
<div class="t" style="left:811.3px;top:295px;font-size:10px;letter-spacing:0.35px;transform-origin:0 0;transform:scaleX(0.9800)">14:04</div>
<div class="a" style="left:860.0px;top:293px;width:1px;height:28px;background:#808080"></div>
<div class="a" style="left:861.0px;top:293px;width:1px;height:28px;background:#fff"></div>
<div class="t" style="left:866.8px;top:295px;font-size:10px;letter-spacing:0.35px;transform-origin:0 0;transform:scaleX(0.9800)">14:05</div>
<div class="a" style="left:915.5px;top:293px;width:1px;height:28px;background:#808080"></div>
<div class="a" style="left:916.5px;top:293px;width:1px;height:28px;background:#fff"></div>
<div class="t" style="left:922.3px;top:295px;font-size:10px;letter-spacing:0.35px;transform-origin:0 0;transform:scaleX(0.9800)">14:06</div>
<div class="a" style="left:971.0px;top:293px;width:1px;height:28px;background:#808080"></div>
<div class="a" style="left:972.0px;top:293px;width:1px;height:28px;background:#fff"></div>
<div class="t" style="left:977.8px;top:295px;font-size:10px;letter-spacing:0.35px;transform-origin:0 0;transform:scaleX(0.9800)">14:07</div>
<div class="a" style="left:1026.5px;top:293px;width:1px;height:28px;background:#808080"></div>
<div class="a" style="left:1027.5px;top:293px;width:1px;height:28px;background:#fff"></div>
<div class="t" style="left:1033.3px;top:295px;font-size:10px;letter-spacing:0.35px;transform-origin:0 0;transform:scaleX(0.9800)">14:08</div>
<div class="a" style="left:584px;top:323px;width:463px;height:416px;background:#fff"></div>
<div class="a" style="left:584px;top:337.82px;width:463px;height:1px;background:#dbdbdb"></div>
<div class="a" style="left:584px;top:352.64px;width:463px;height:1px;background:#dbdbdb"></div>
<div class="a" style="left:584px;top:367.46px;width:463px;height:1px;background:#dbdbdb"></div>
<div class="a" style="left:584px;top:382.28px;width:463px;height:1px;background:#dbdbdb"></div>
<div class="a" style="left:584px;top:397.1px;width:463px;height:1px;background:#dbdbdb"></div>
<div class="a" style="left:584px;top:411.92px;width:463px;height:1px;background:#dbdbdb"></div>
<div class="a" style="left:584px;top:426.74px;width:463px;height:1px;background:#dbdbdb"></div>
<div class="a" style="left:584px;top:441.56px;width:463px;height:1px;background:#dbdbdb"></div>
<div class="a" style="left:584px;top:456.38px;width:463px;height:1px;background:#dbdbdb"></div>
<div class="a" style="left:584px;top:471.2px;width:463px;height:1px;background:#dbdbdb"></div>
<div class="a" style="left:584px;top:486.02px;width:463px;height:1px;background:#dbdbdb"></div>
<div class="a" style="left:584px;top:500.84000000000003px;width:463px;height:1px;background:#dbdbdb"></div>
<div class="a" style="left:584px;top:515.66px;width:463px;height:1px;background:#dbdbdb"></div>
<div class="a" style="left:584px;top:530.48px;width:463px;height:1px;background:#dbdbdb"></div>
<div class="a" style="left:584px;top:545.3px;width:463px;height:1px;background:#dbdbdb"></div>
<div class="a" style="left:584px;top:560.12px;width:463px;height:1px;background:#dbdbdb"></div>
<div class="a" style="left:584px;top:574.94px;width:463px;height:1px;background:#dbdbdb"></div>
<div class="a" style="left:584px;top:589.76px;width:463px;height:1px;background:#dbdbdb"></div>
<div class="a" style="left:584px;top:604.5799999999999px;width:463px;height:1px;background:#dbdbdb"></div>
<div class="a" style="left:584px;top:619.4px;width:463px;height:1px;background:#dbdbdb"></div>
<div class="a" style="left:584px;top:634.22px;width:463px;height:1px;background:#dbdbdb"></div>
<div class="a" style="left:584px;top:649.04px;width:463px;height:1px;background:#dbdbdb"></div>
<div class="a" style="left:584px;top:663.86px;width:463px;height:1px;background:#dbdbdb"></div>
<div class="a" style="left:584px;top:678.6800000000001px;width:463px;height:1px;background:#dbdbdb"></div>
<div class="a" style="left:584px;top:693.5px;width:463px;height:1px;background:#dbdbdb"></div>
<div class="a" style="left:584px;top:708.3199999999999px;width:463px;height:1px;background:#dbdbdb"></div>
<div class="a" style="left:584px;top:723.14px;width:463px;height:1px;background:#dbdbdb"></div>
<div class="a" style="left:584px;top:737.96px;width:463px;height:1px;background:#dbdbdb"></div>
<div class="a" style="left:638.5px;top:323px;width:1px;height:416px;background:#dbdbdb"></div>
<div class="a" style="left:694.0px;top:323px;width:1px;height:416px;background:#dbdbdb"></div>
<div class="a" style="left:749.5px;top:323px;width:1px;height:416px;background:#dbdbdb"></div>
<div class="a" style="left:805.0px;top:323px;width:1px;height:416px;background:#dbdbdb"></div>
<div class="a" style="left:860.5px;top:323px;width:1px;height:416px;background:#dbdbdb"></div>
<div class="a" style="left:916.0px;top:323px;width:1px;height:416px;background:#dbdbdb"></div>
<div class="a" style="left:971.5px;top:323px;width:1px;height:416px;background:#dbdbdb"></div>
<div class="a" style="left:1027.0px;top:323px;width:1px;height:416px;background:#dbdbdb"></div>
<div class="a" style="left:647.5px;top:323px;width:2px;height:431px;background:#303030"></div>
<div class="a" style="left:316px;top:323px;width:266px;height:432px;overflow:hidden">
<div class="a" style="left:0;top:14.02px;width:266px;height:1px;background:#808080"></div>
<div class="a" style="left:0;top:15.02px;width:266px;height:1px;background:#fff"></div>
<div class="t" style="left:17.2px;top:2.50px;font-size:10.5px;transform-origin:0 0;transform:scaleX(0.9286)">Talk Group: <span style="display:inline-block;transform-origin:0 0;transform:scaleX(0.945)">FCFD CH? FIRE INSPECTORS</span></div>
<div class="a" style="left:0;top:28.84px;width:266px;height:1px;background:#808080"></div>
<div class="a" style="left:0;top:29.84px;width:266px;height:1px;background:#fff"></div>
<div class="t" style="left:17.2px;top:17.32px;font-size:10.5px;transform-origin:0 0;transform:scaleX(0.9286)">Talk Group: <span style="display:inline-block;transform-origin:0 0;transform:scaleX(0.945)">CRIMINAL JUSTICE ACADEMY TRACK 1</span></div>
<div class="a" style="left:0;top:43.66px;width:266px;height:1px;background:#808080"></div>
<div class="a" style="left:0;top:44.66px;width:266px;height:1px;background:#fff"></div>
<div class="t" style="left:17.2px;top:32.14px;font-size:10.5px;transform-origin:0 0;transform:scaleX(0.9286)">Talk Group: <span style="display:inline-block;transform-origin:0 0;transform:scaleX(0.945)">CRIMINAL JUSTICE ACADEMY TRACK 2</span></div>
<div class="a" style="left:0;top:58.48px;width:266px;height:1px;background:#808080"></div>
<div class="a" style="left:0;top:59.48px;width:266px;height:1px;background:#fff"></div>
<div class="t" style="left:17.2px;top:46.96px;font-size:10.5px;transform-origin:0 0;transform:scaleX(0.9286)">Talk Group: <span style="display:inline-block;transform-origin:0 0;transform:scaleX(0.945)">FC SHERIFF COURT HOLDING</span></div>
<div class="a" style="left:0;top:73.30px;width:266px;height:1px;background:#808080"></div>
<div class="a" style="left:0;top:74.30px;width:266px;height:1px;background:#fff"></div>
<div class="t" style="left:17.2px;top:61.78px;font-size:10.5px;transform-origin:0 0;transform:scaleX(0.9286)">Talk Group: <span style="display:inline-block;transform-origin:0 0;transform:scaleX(0.945)">FCPD CH-1 DISPATCH HQ/MOTORCYCLES/HELICOPTER</span></div>
<div class="a" style="left:0;top:88.12px;width:266px;height:1px;background:#808080"></div>
<div class="a" style="left:0;top:89.12px;width:266px;height:1px;background:#fff"></div>
<div class="t" style="left:17.2px;top:76.60px;font-size:10.5px;transform-origin:0 0;transform:scaleX(0.9286)">Talk Group: <span style="display:inline-block;transform-origin:0 0;transform:scaleX(0.945)">FCPD CIB2 (AND TEMPORARY LINK TO SERS)</span></div>
<div class="a" style="left:0;top:102.94px;width:266px;height:1px;background:#808080"></div>
<div class="a" style="left:0;top:103.94px;width:266px;height:1px;background:#fff"></div>
<div class="t" style="left:17.2px;top:91.42px;font-size:10.5px;transform-origin:0 0;transform:scaleX(0.9286)">Talk Group: <span style="display:inline-block;transform-origin:0 0;transform:scaleX(0.945)">CRIMINAL JUSTICE ACADEMY TRACK 4</span></div>
<div class="a" style="left:0;top:117.76px;width:266px;height:1px;background:#808080"></div>
<div class="a" style="left:0;top:118.76px;width:266px;height:1px;background:#fff"></div>
<div class="t" style="left:17.2px;top:106.24px;font-size:10.5px;transform-origin:0 0;transform:scaleX(0.9286)">Talk Group: <span style="display:inline-block;transform-origin:0 0;transform:scaleX(0.945)">CRIMINAL JUSTICE ACADEMY TRACK 3</span></div>
<div class="a" style="left:0;top:132.58px;width:266px;height:1px;background:#808080"></div>
<div class="a" style="left:0;top:133.58px;width:266px;height:1px;background:#fff"></div>
<div class="t" style="left:17.2px;top:121.06px;font-size:10.5px;transform-origin:0 0;transform:scaleX(0.9286)">Talk Group: <span style="display:inline-block;transform-origin:0 0;transform:scaleX(0.945)">No Value</span></div>
<div class="a" style="left:0;top:147.40px;width:266px;height:1px;background:#808080"></div>
<div class="a" style="left:0;top:148.40px;width:266px;height:1px;background:#fff"></div>
<div class="t" style="left:17.2px;top:135.88px;font-size:10.5px;transform-origin:0 0;transform:scaleX(0.9286)">Talk Group: <span style="display:inline-block;transform-origin:0 0;transform:scaleX(0.945)">FCPD CH-4 DISPATCH (3/4) MASON (ANNONDALE)</span></div>
<div class="a" style="left:0;top:162.22px;width:266px;height:1px;background:#808080"></div>
<div class="a" style="left:0;top:163.22px;width:266px;height:1px;background:#fff"></div>
<div class="t" style="left:17.2px;top:150.70px;font-size:10.5px;transform-origin:0 0;transform:scaleX(0.9286)">Talk Group: <span style="display:inline-block;transform-origin:0 0;transform:scaleX(0.945)">FCFD CH-9A FAIRFAX HOSPITAL ER</span></div>
<div class="a" style="left:0;top:177.04px;width:266px;height:1px;background:#808080"></div>
<div class="a" style="left:0;top:178.04px;width:266px;height:1px;background:#fff"></div>
<div class="t" style="left:17.2px;top:165.52px;font-size:10.5px;transform-origin:0 0;transform:scaleX(0.9286)">Talk Group: <span style="display:inline-block;transform-origin:0 0;transform:scaleX(0.945)">FCPD WEST SPRINGFIELD TAC-1</span></div>
<div class="a" style="left:0;top:191.86px;width:266px;height:1px;background:#808080"></div>
<div class="a" style="left:0;top:192.86px;width:266px;height:1px;background:#fff"></div>
<div class="t" style="left:17.2px;top:180.34px;font-size:10.5px;transform-origin:0 0;transform:scaleX(0.9286)">Talk Group: <span style="display:inline-block;transform-origin:0 0;transform:scaleX(0.945)">FAIRFAX CITY PD</span></div>
<div class="a" style="left:0;top:206.68px;width:266px;height:1px;background:#808080"></div>
<div class="a" style="left:0;top:207.68px;width:266px;height:1px;background:#fff"></div>
<div class="t" style="left:17.2px;top:195.16px;font-size:10.5px;transform-origin:0 0;transform:scaleX(0.9286)">Talk Group: <span style="display:inline-block;transform-origin:0 0;transform:scaleX(0.945)">HERNDON PD DISPLATCH</span></div>
<div class="a" style="left:0;top:221.50px;width:266px;height:1px;background:#808080"></div>
<div class="a" style="left:0;top:222.50px;width:266px;height:1px;background:#fff"></div>
<div class="t" style="left:17.2px;top:209.98px;font-size:10.5px;transform-origin:0 0;transform:scaleX(0.9286)">Talk Group: <span style="display:inline-block;transform-origin:0 0;transform:scaleX(0.945)">FCFD CH? ON DUTY EMS CREW</span></div>
<div class="a" style="left:0;top:236.32px;width:266px;height:1px;background:#808080"></div>
<div class="a" style="left:0;top:237.32px;width:266px;height:1px;background:#fff"></div>
<div class="t" style="left:17.2px;top:224.80px;font-size:10.5px;transform-origin:0 0;transform:scaleX(0.9286)">Talk Group: <span style="display:inline-block;transform-origin:0 0;transform:scaleX(0.945)">FCPD FRANCONIA TAC-1</span></div>
<div class="a" style="left:0;top:251.14px;width:266px;height:1px;background:#808080"></div>
<div class="a" style="left:0;top:252.14px;width:266px;height:1px;background:#fff"></div>
<div class="t" style="left:17.2px;top:239.62px;font-size:10.5px;transform-origin:0 0;transform:scaleX(0.9286)">Talk Group: <span style="display:inline-block;transform-origin:0 0;transform:scaleX(0.945)">FCFD CH-4A DISPATCH (SIMULCAST ON 460)</span></div>
<div class="a" style="left:0;top:265.96px;width:266px;height:1px;background:#808080"></div>
<div class="a" style="left:0;top:266.96px;width:266px;height:1px;background:#fff"></div>
<div class="t" style="left:17.2px;top:254.44px;font-size:10.5px;transform-origin:0 0;transform:scaleX(0.9286)">Talk Group: <span style="display:inline-block;transform-origin:0 0;transform:scaleX(0.945)">FCFD CH-4F</span></div>
<div class="a" style="left:0;top:280.78px;width:266px;height:1px;background:#808080"></div>
<div class="a" style="left:0;top:281.78px;width:266px;height:1px;background:#fff"></div>
<div class="t" style="left:17.2px;top:269.26px;font-size:10.5px;transform-origin:0 0;transform:scaleX(0.9286)">Talk Group: <span style="display:inline-block;transform-origin:0 0;transform:scaleX(0.945)">FCFD CH? FIRE SYSTEMS TESTING</span></div>
<div class="a" style="left:0;top:295.60px;width:266px;height:1px;background:#808080"></div>
<div class="a" style="left:0;top:296.60px;width:266px;height:1px;background:#fff"></div>
<div class="t" style="left:17.2px;top:284.08px;font-size:10.5px;transform-origin:0 0;transform:scaleX(0.9286)">Talk Group: <span style="display:inline-block;transform-origin:0 0;transform:scaleX(0.945)">FCPD RESTON TAC-1</span></div>
<div class="a" style="left:0;top:310.42px;width:266px;height:1px;background:#808080"></div>
<div class="a" style="left:0;top:311.42px;width:266px;height:1px;background:#fff"></div>
<div class="t" style="left:17.2px;top:298.90px;font-size:10.5px;transform-origin:0 0;transform:scaleX(0.9286)">Talk Group: <span style="display:inline-block;transform-origin:0 0;transform:scaleX(0.945)">FC SHERIFF</span></div>
<div class="a" style="left:0;top:325.24px;width:266px;height:1px;background:#808080"></div>
<div class="a" style="left:0;top:326.24px;width:266px;height:1px;background:#fff"></div>
<div class="t" style="left:17.2px;top:313.72px;font-size:10.5px;transform-origin:0 0;transform:scaleX(0.9286)">Talk Group: <span style="display:inline-block;transform-origin:0 0;transform:scaleX(0.945)">FCPD CH-5 DISPATCH (5/8) RESTON</span></div>
<div class="a" style="left:0;top:340.06px;width:266px;height:1px;background:#808080"></div>
<div class="a" style="left:0;top:341.06px;width:266px;height:1px;background:#fff"></div>
<div class="t" style="left:17.2px;top:328.54px;font-size:10.5px;transform-origin:0 0;transform:scaleX(0.9286)">Talk Group: <span style="display:inline-block;transform-origin:0 0;transform:scaleX(0.945)">FC SHERIFF CH-1 JAIL OPS</span></div>
<div class="a" style="left:0;top:354.88px;width:266px;height:1px;background:#808080"></div>
<div class="a" style="left:0;top:355.88px;width:266px;height:1px;background:#fff"></div>
<div class="t" style="left:17.2px;top:343.36px;font-size:10.5px;transform-origin:0 0;transform:scaleX(0.9286)">Talk Group: <span style="display:inline-block;transform-origin:0 0;transform:scaleX(0.945)">FCPD FAIR OAKS TAC-1</span></div>
<div class="a" style="left:0;top:369.70px;width:266px;height:1px;background:#808080"></div>
<div class="a" style="left:0;top:370.70px;width:266px;height:1px;background:#fff"></div>
<div class="t" style="left:17.2px;top:358.18px;font-size:10.5px;transform-origin:0 0;transform:scaleX(0.9286)">Talk Group: <span style="display:inline-block;transform-origin:0 0;transform:scaleX(0.945)">FCPD MASON TAC-1</span></div>
<div class="a" style="left:0;top:384.52px;width:266px;height:1px;background:#808080"></div>
<div class="a" style="left:0;top:385.52px;width:266px;height:1px;background:#fff"></div>
<div class="t" style="left:17.2px;top:373.00px;font-size:10.5px;transform-origin:0 0;transform:scaleX(0.9286)">Talk Group: <span style="display:inline-block;transform-origin:0 0;transform:scaleX(0.945)">FCPD CH-2 DISPATCH (2/6) MOUNT VERNON</span></div>
<div class="a" style="left:0;top:399.34px;width:266px;height:1px;background:#808080"></div>
<div class="a" style="left:0;top:400.34px;width:266px;height:1px;background:#fff"></div>
<div class="t" style="left:17.2px;top:387.82px;font-size:10.5px;transform-origin:0 0;transform:scaleX(0.9286)">Talk Group: <span style="display:inline-block;transform-origin:0 0;transform:scaleX(0.945)">SCHOOL SECURITY MAIN</span></div>
<div class="a" style="left:0;top:414.16px;width:266px;height:1px;background:#808080"></div>
<div class="a" style="left:0;top:415.16px;width:266px;height:1px;background:#fff"></div>
<div class="t" style="left:17.2px;top:402.64px;font-size:10.5px;transform-origin:0 0;transform:scaleX(0.9286)">Talk Group: <span style="display:inline-block;transform-origin:0 0;transform:scaleX(0.945)">FCPD OSB</span></div>
<div class="a" style="left:0;top:428.98px;width:266px;height:1px;background:#808080"></div>
<div class="a" style="left:0;top:429.98px;width:266px;height:1px;background:#fff"></div>
<div class="t" style="left:17.2px;top:417.46px;font-size:10.5px;transform-origin:0 0;transform:scaleX(0.9286)">Talk Group: <span style="display:inline-block;transform-origin:0 0;transform:scaleX(0.945)">FCPD WEST SPRINGFIELD TAC-2</span></div>
</div>
<div class="a" style="left:627.0px;top:326.00px;width:8.3px;height:11px;background:#2d47a8"></div>
<div class="a" style="left:629.7px;top:340.82px;width:6.1px;height:11px;background:#2d47a8"></div>
<div class="a" style="left:857.2px;top:340.82px;width:12.5px;height:11px;background:#2d47a8"></div>
<div class="a" style="left:983.3px;top:340.82px;width:35.7px;height:11px;background:#2d47a8"></div>
<div class="a" style="left:635.3px;top:355.64px;width:5.7px;height:11px;background:#2d47a8"></div>
<div class="a" style="left:783.0px;top:355.64px;width:18.6px;height:11px;background:#2d47a8"></div>
<div class="a" style="left:982.8px;top:355.64px;width:5.5px;height:11px;background:#2d47a8"></div>
<div class="a" style="left:649.0px;top:370.46px;width:5.9px;height:11px;background:#e01818"></div>
<div class="a" style="left:926.3px;top:370.46px;width:13.0px;height:11px;background:#2d47a8"></div>
<div class="a" style="left:942.4px;top:370.46px;width:7.0px;height:11px;background:#2d47a8"></div>
<div class="a" style="left:649.5px;top:385.28px;width:4.2px;height:11px;background:#2d47a8"></div>
<div class="a" style="left:809.0px;top:385.28px;width:7.7px;height:11px;background:#2d47a8"></div>
<div class="a" style="left:944.9px;top:385.28px;width:5.8px;height:11px;background:#2d47a8"></div>
<div class="a" style="left:650.4px;top:400.10px;width:8.2px;height:11px;background:#2d47a8"></div>
<div class="a" style="left:684.3px;top:414.92px;width:12.0px;height:11px;background:#2d47a8"></div>
<div class="a" style="left:810.7px;top:414.92px;width:4.3px;height:11px;background:#2d47a8"></div>
<div class="a" style="left:987.0px;top:414.92px;width:21.0px;height:11px;background:#2d47a8"></div>
<div class="a" style="left:687.3px;top:429.74px;width:8.3px;height:11px;background:#2d47a8"></div>
<div class="a" style="left:967.2px;top:429.74px;width:5.6px;height:11px;background:#2d47a8"></div>
<div class="a" style="left:690.0px;top:444.56px;width:19.4px;height:11px;background:#2d47a8"></div>
<div class="a" style="left:724.0px;top:444.56px;width:4.7px;height:11px;background:#2d47a8"></div>
<div class="a" style="left:752.0px;top:444.56px;width:14.7px;height:11px;background:#2d47a8"></div>
<div class="a" style="left:882.8px;top:444.56px;width:8.6px;height:11px;background:#2d47a8"></div>
<div class="a" style="left:717.7px;top:459.38px;width:9.3px;height:11px;background:#2d47a8"></div>
<div class="a" style="left:718.8px;top:474.20px;width:49.7px;height:11px;background:#2d47a8"></div>
<div class="a" style="left:782.0px;top:489.02px;width:6.9px;height:11px;background:#2d47a8"></div>
<div class="a" style="left:883.1px;top:489.02px;width:6.4px;height:11px;background:#2d47a8"></div>
<div class="a" style="left:902.5px;top:489.02px;width:6.1px;height:11px;background:#2d47a8"></div>
<div class="a" style="left:922.8px;top:489.02px;width:5.4px;height:11px;background:#2d47a8"></div>
<div class="a" style="left:784.0px;top:503.84px;width:12.2px;height:11px;background:#2d47a8"></div>
<div class="a" style="left:853.3px;top:503.84px;width:3.9px;height:11px;background:#2d47a8"></div>
<div class="a" style="left:879.2px;top:503.84px;width:3.7px;height:11px;background:#2d47a8"></div>
<div class="a" style="left:809.7px;top:518.66px;width:5.8px;height:11px;background:#2d47a8"></div>
<div class="a" style="left:902.2px;top:518.66px;width:5.9px;height:11px;background:#2d47a8"></div>
<div class="a" style="left:966.8px;top:518.66px;width:6.9px;height:11px;background:#2d47a8"></div>
<div class="a" style="left:1026.0px;top:518.66px;width:11.3px;height:11px;background:#2d47a8"></div>
<div class="a" style="left:835.9px;top:533.48px;width:8.6px;height:11px;background:#2d47a8"></div>
<div class="a" style="left:837.6px;top:548.30px;width:10.3px;height:11px;background:#2d47a8"></div>
<div class="a" style="left:837.6px;top:563.12px;width:6.9px;height:11px;background:#2d47a8"></div>
<div class="a" style="left:853.3px;top:563.12px;width:13.2px;height:11px;background:#2d47a8"></div>
<div class="a" style="left:906.1px;top:563.12px;width:17.7px;height:11px;background:#2d47a8"></div>
<div class="a" style="left:924.3px;top:577.94px;width:4.9px;height:11px;background:#2d47a8"></div>
<div class="a" style="left:941.1px;top:592.76px;width:6.4px;height:11px;background:#2d47a8"></div>
<div class="a" style="left:963.2px;top:607.58px;width:4.9px;height:11px;background:#2d47a8"></div>
<div class="a" style="left:1023.1px;top:622.40px;width:9.6px;height:11px;background:#2d47a8"></div>
<div class="a" style="left:1032.4px;top:637.22px;width:9.3px;height:11px;background:#2d47a8"></div>
<div class="a chk" style="left:1047px;top:338px;width:15px;height:401px"></div>
<div class="a" style="left:1061px;top:323px;width:1px;height:416px;background:#303030"></div>
<div class="raised" style="left:1047px;top:325px;width:15px;height:13px;"></div>
<svg class="a" style="left:1047px;top:325px" width="15" height="13"><path d="M4.0 8.5 h7 l-3.5 -3.5 z" fill="#000"/></svg>
<div class="raised" style="left:1047px;top:338px;width:15px;height:272px;"></div>
<div class="raised" style="left:1047px;top:724px;width:15px;height:15px;"></div>
<svg class="a" style="left:1047px;top:724px" width="15" height="15"><path d="M4.0 6.0 h7 l-3.5 3.5 z" fill="#000"/></svg>
<div class="a chk" style="left:584px;top:739px;width:463px;height:15px"></div>
<div class="raised" style="left:584px;top:739px;width:14px;height:15px;"></div>
<svg class="a" style="left:584px;top:739px" width="14" height="15"><path d="M8.5 4.0 v7 l-3.5 -3.5 z" fill="#000"/></svg>
<div class="raised" style="left:598px;top:739px;width:50px;height:15px;"></div>
<div class="raised" style="left:1032px;top:739px;width:15px;height:15px;"></div>
<svg class="a" style="left:1032px;top:739px" width="15" height="15"><path d="M6.0 4.0 v7 l3.5 -3.5 z" fill="#000"/></svg>
<div class="a" style="left:1047px;top:739px;width:15px;height:15px;background:#d4d0c8"></div>
<div class="a" style="left:647.5px;top:739px;width:2px;height:15px;background:#303030"></div>
<div class="a" style="left:584px;top:752px;width:64px;height:2px;background:#303030"></div>
<div class="a" style="left:0px;top:755px;width:1064px;height:1px;background:#fff"></div>
<div class="a" style="left:0px;top:757px;width:137px;height:15px;border-top:1px solid #808080;border-left:1px solid #808080;border-bottom:1px solid #fff;border-right:1px solid #fff"></div>
<div class="t" style="left:2px;top:760px;font-size:10px;transform-origin:0 0;transform:scaleX(0.9800)">Eastern Daylight Time</div>
<div class="a" style="left:140px;top:757px;width:89px;height:15px;border-top:1px solid #808080;border-left:1px solid #808080;border-bottom:1px solid #fff;border-right:1px solid #fff"></div>
<div class="t" style="left:142px;top:760px;font-size:10px;transform-origin:0 0;transform:scaleX(0.9800)">Normal Mode</div>
<div class="a" style="left:232px;top:757px;width:832px;height:15px;border-top:1px solid #808080;border-left:1px solid #808080;border-bottom:1px solid #fff;border-right:1px solid #fff"></div>
<div class="t" style="left:234px;top:760px;font-size:10px;transform-origin:0 0;transform:scaleX(0.9800)">Ready</div>
</body></html>
